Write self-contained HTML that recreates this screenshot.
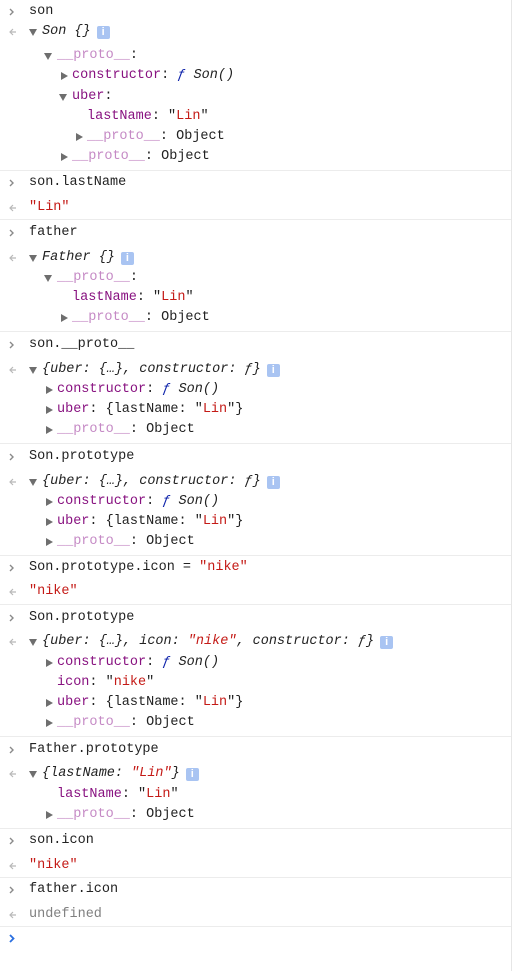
<!DOCTYPE html>
<html><head><meta charset="utf-8"><style>
body{margin:0;background:#fff;width:514px;height:971px;overflow:hidden;position:relative;font-family:"Liberation Mono",monospace;font-size:13.5px;color:#222}
.l{position:absolute;height:20px;line-height:20px;white-space:pre}
.k{color:#881280}.p{color:#c58ac5}.s{color:#c41a16}.f{color:#0d22aa;font-style:italic}.i{font-style:italic}
.u{color:#808080}
.sep{position:absolute;left:0;width:511px;height:1px;background:#ececec}
.tr,.td{position:absolute;top:6px;width:0;height:0}
.tr{left:-11px;border-top:4px solid transparent;border-bottom:4px solid transparent;border-left:7px solid #6e6e6e}
.td{left:-13px;top:7px;border-left:4.5px solid transparent;border-right:4.5px solid transparent;border-top:7px solid #6e6e6e}
.b{display:inline-block;width:13px;height:13px;background:#a9c4f2;border-radius:2px;color:#fff;font:bold 11px "Liberation Sans",sans-serif;text-align:center;line-height:13px;vertical-align:-1px;margin-left:6px;font-style:normal}
.vs{position:absolute;left:511px;top:0;width:1px;height:971px;background:#e6e6e6}
</style></head><body>
<div class="vs"></div>
<div class="sep" style="top:170px"></div>
<div class="sep" style="top:219px"></div>
<div class="sep" style="top:331px"></div>
<div class="sep" style="top:443px"></div>
<div class="sep" style="top:555px"></div>
<div class="sep" style="top:604px"></div>
<div class="sep" style="top:736px"></div>
<div class="sep" style="top:828px"></div>
<div class="sep" style="top:877px"></div>
<div class="sep" style="top:926px"></div>

<svg style="position:absolute;left:0;top:0" width="30" height="971">
<g fill="none" stroke="#8a8a8a" stroke-width="1.4">
<path d="M10 9l3 3-3 3"/><path d="M10 180l3 3-3 3"/><path d="M10 230l3 3-3 3"/><path d="M10 342l3 3-3 3"/><path d="M10 454l3 3-3 3"/><path d="M10 565l3 3-3 3"/><path d="M10 615l3 3-3 3"/><path d="M10 747l3 3-3 3"/><path d="M10 838l3 3-3 3"/><path d="M10 887l3 3-3 3"/>
</g>
<g fill="none" stroke="#b8b8b8" stroke-width="1.2">
<path d="M13 29l-3 3 3 3M10 32h6"/><path d="M13 205l-3 3 3 3M10 208h6"/><path d="M13 255l-3 3 3 3M10 258h6"/><path d="M13 367l-3 3 3 3M10 370h6"/><path d="M13 479l-3 3 3 3M10 482h6"/><path d="M13 589l-3 3 3 3M10 592h6"/><path d="M13 639l-3 3 3 3M10 642h6"/><path d="M13 771l-3 3 3 3M10 774h6"/><path d="M13 863l-3 3 3 3M10 866h6"/><path d="M13 912l-3 3 3 3M10 915h6"/>
</g>
<path d="M10 935l3.5 3.5-3.5 3.5" fill="none" stroke="#2a6fe0" stroke-width="1.8"/>
</svg>

<div class="l" style="top:2px;left:29px">son</div>
<div class="l" style="top:22px;left:42px"><span class="td"></span><span class="i">Son {}</span><span class="b">i</span></div>
<div class="l" style="top:46px;left:57px"><span class="td"></span><span class="p">__proto__</span>:</div>
<div class="l" style="top:66px;left:72px"><span class="tr"></span><span class="k">constructor</span>: <span class="f">ƒ</span> <span class="i">Son()</span></div>
<div class="l" style="top:87px;left:72px"><span class="td"></span><span class="k">uber</span>:</div>
<div class="l" style="top:107px;left:87px"><span class="k">lastName</span>: "<span class="s">Lin</span>"</div>
<div class="l" style="top:127px;left:87px"><span class="tr"></span><span class="p">__proto__</span>: Object</div>
<div class="l" style="top:147px;left:72px"><span class="tr"></span><span class="p">__proto__</span>: Object</div>

<div class="l" style="top:173px;left:29px">son.lastName</div>
<div class="l s" style="top:198px;left:29px">"Lin"</div>

<div class="l" style="top:223px;left:29px">father</div>
<div class="l" style="top:248px;left:42px"><span class="td"></span><span class="i">Father {}</span><span class="b">i</span></div>
<div class="l" style="top:268px;left:57px"><span class="td"></span><span class="p">__proto__</span>:</div>
<div class="l" style="top:288px;left:72px"><span class="k">lastName</span>: "<span class="s">Lin</span>"</div>
<div class="l" style="top:308px;left:72px"><span class="tr"></span><span class="p">__proto__</span>: Object</div>

<div class="l" style="top:335px;left:29px">son.__proto__</div>
<div class="l i" style="top:360px;left:42px"><span class="td"></span>{uber: {…}, constructor: ƒ}<span class="b">i</span></div>
<div class="l" style="top:380px;left:57px"><span class="tr"></span><span class="k">constructor</span>: <span class="f">ƒ</span> <span class="i">Son()</span></div>
<div class="l" style="top:400px;left:57px"><span class="tr"></span><span class="k">uber</span>: {lastName: "<span class="s">Lin</span>"}</div>
<div class="l" style="top:420px;left:57px"><span class="tr"></span><span class="p">__proto__</span>: Object</div>

<div class="l" style="top:447px;left:29px">Son.prototype</div>
<div class="l i" style="top:472px;left:42px"><span class="td"></span>{uber: {…}, constructor: ƒ}<span class="b">i</span></div>
<div class="l" style="top:492px;left:57px"><span class="tr"></span><span class="k">constructor</span>: <span class="f">ƒ</span> <span class="i">Son()</span></div>
<div class="l" style="top:512px;left:57px"><span class="tr"></span><span class="k">uber</span>: {lastName: "<span class="s">Lin</span>"}</div>
<div class="l" style="top:532px;left:57px"><span class="tr"></span><span class="p">__proto__</span>: Object</div>

<div class="l" style="top:558px;left:29px">Son.prototype.icon = <span class="s">"nike"</span></div>
<div class="l s" style="top:582px;left:29px">"nike"</div>

<div class="l" style="top:608px;left:29px">Son.prototype</div>
<div class="l i" style="top:632px;left:42px"><span class="td"></span>{uber: {…}, icon: <span class="s">"nike"</span>, constructor: ƒ}<span class="b">i</span></div>
<div class="l" style="top:653px;left:57px"><span class="tr"></span><span class="k">constructor</span>: <span class="f">ƒ</span> <span class="i">Son()</span></div>
<div class="l" style="top:673px;left:57px"><span class="k">icon</span>: "<span class="s">nike</span>"</div>
<div class="l" style="top:693px;left:57px"><span class="tr"></span><span class="k">uber</span>: {lastName: "<span class="s">Lin</span>"}</div>
<div class="l" style="top:713px;left:57px"><span class="tr"></span><span class="p">__proto__</span>: Object</div>

<div class="l" style="top:740px;left:29px">Father.prototype</div>
<div class="l i" style="top:764px;left:42px"><span class="td"></span>{lastName: <span class="s">"Lin"</span>}<span class="b">i</span></div>
<div class="l" style="top:785px;left:57px"><span class="k">lastName</span>: "<span class="s">Lin</span>"</div>
<div class="l" style="top:805px;left:57px"><span class="tr"></span><span class="p">__proto__</span>: Object</div>

<div class="l" style="top:831px;left:29px">son.icon</div>
<div class="l s" style="top:856px;left:29px">"nike"</div>

<div class="l" style="top:880px;left:29px">father.icon</div>
<div class="l u" style="top:905px;left:29px">undefined</div>
</body></html>
